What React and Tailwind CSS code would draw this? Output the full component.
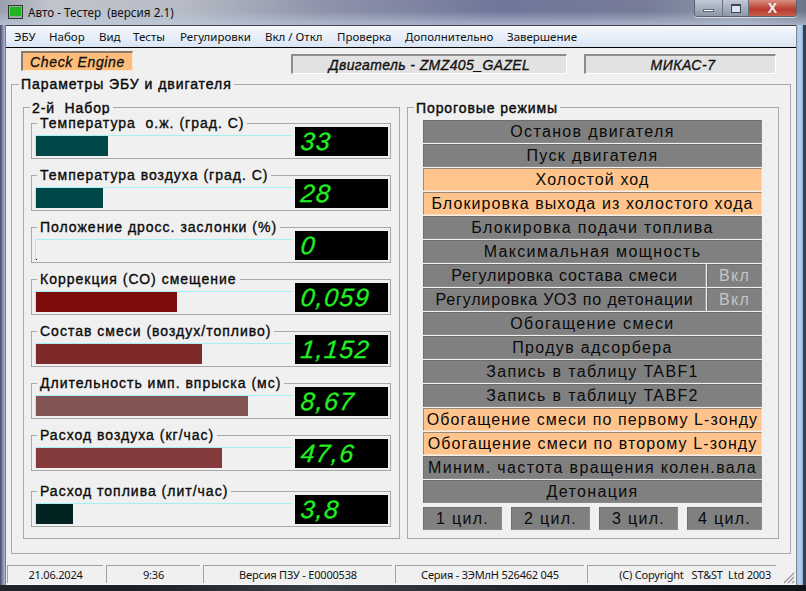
const sans = "font-['Liberation_Sans',Arial,sans-serif]";
const ui = "font-['Noto_Sans',sans-serif]";

const rows = [
  { label: "Температура  о.ж. (град. С)", value: "33", w: 72, color: "bg-[#004848]" },
  { label: "Температура воздуха (град. С)", value: "28", w: 67, color: "bg-[#004848]" },
  { label: "Положение дросс. заслонки (%)", value: "0", w: 0, color: "bg-[#004848]" },
  { label: "Коррекция (СО) смещение", value: "0,059", w: 141, color: "bg-[#7f0c0c]" },
  { label: "Состав смеси (воздух/топливо)", value: "1,152", w: 166, color: "bg-[#7f2a2a]" },
  { label: "Длительность имп. впрыска (мс)", value: "8,67", w: 212, color: "bg-[#835454]" },
  { label: "Расход воздуха (кг/час)", value: "47,6", w: 186, color: "bg-[#843a3c]" },
  { label: "Расход топлива (лит/час)", value: "3,8", w: 37, color: "bg-[#032222]", last: true },
];

const modes = [
  ["Останов двигателя"],
  ["Пуск двигателя"],
  ["Холостой ход", "on"],
  ["Блокировка выхода из холостого хода", "on"],
  ["Блокировка подачи топлива"],
  ["Максимальная мощность"],
  ["Регулировка состава смеси", "split"],
  ["Регулировка УОЗ по детонации", "split"],
  ["Обогащение смеси"],
  ["Продув адсорбера"],
  ["Запись в таблицу TABF1"],
  ["Запись в таблицу TABF2"],
  ["Обогащение смеси по первому L-зонду", "on"],
  ["Обогащение смеси по второму L-зонду", "on"],
  ["Миним. частота вращения колен.вала"],
  ["Детонация"],
];

const menu = [
  ["ЭБУ", "w-[35px]"],
  ["Набор", "w-[50px]"],
  ["Вид", "w-[34px]"],
  ["Тесты", "w-[47px]"],
  ["Регулировки", "w-[85px]"],
  ["Вкл / Откл", "w-[72px]"],
  ["Проверка", "w-[68px]"],
  ["Дополнительно", "w-[102px]"],
  ["Завершение", "w-[80px]"],
];

const status = [
  ["21.06.2024", "w-[96px] justify-center"],
  ["9:36", "w-[94px] justify-center"],
  ["Версия ПЗУ - Е0000538", "w-[189px] justify-center"],
  ["Серия - 3ЭМлН 526462 045", "w-[189px] justify-center"],
  ["(C) Copyright   ST&ST  Ltd 2003", "w-[189px] justify-end pr-[5px]"],
];

const btn = "h-[23px] flex items-center justify-center border-t border-l border-t-[#6e6e6e] border-l-[#6e6e6e] border-r border-b border-r-[#8a8a8a] border-b-[#8a8a8a] text-[16px] leading-none whitespace-pre text-[#0a0a0a]";

function Legend({ children, className }) {
  return (
    <span className={`absolute bg-[#f0f0f0] whitespace-pre text-[#0a0a0a] ${className}`}>{children}</span>
  );
}

function Row({ label, value, w, color, last }) {
  return (
    <div className={`relative h-[36px] ml-[7px] w-[360px] border border-[#a8a8a8] pl-[3px] pt-[3px] flex ${last ? "mt-[20px]" : "mt-[16px] first:mt-0"}`}>
      <Legend className={`${sans} left-[5px] top-[-9px] px-[3px] text-[14px] leading-[16px] tracking-[1px] [-webkit-text-stroke:0.35px_#0a0a0a]`}>{label}</Legend>
      <div className="w-[257px] pt-[8px]">
        <div className="h-[1px] bg-[#a4f0f0]" />
        <div className="h-[20px] border-l border-[#a4f0f0] flex items-end">
          {w > 0 ? <div className={`h-full ${color}`} style={{ width: w }} /> : <div className="w-[1px] h-[1px] bg-black" />}
        </div>
      </div>
      <div className={`ml-[3px] w-[93px] h-[29px] bg-black pl-[6px] italic text-[25px] leading-[29px] tracking-[1.3px] text-[#22ee22] ${sans}`}>
        <span className="inline-block -skew-x-6 [-webkit-text-stroke:0.3px_#22ee22]">{value}</span>
      </div>
    </div>
  );
}

function Mode({ text, kind }) {
  const on = kind === "on";
  if (kind === "split") {
    return (
      <div className="flex gap-[1px]">
        <div className={`${btn} w-[283px] bg-[#808080] border-r-[#9a9a9a] tracking-[0.85px]`}>{text}</div>
        <div className={`${btn} flex-1 bg-[#808080] text-[#c4c4c4] tracking-[1.3px]`}>Вкл</div>
      </div>
    );
  }
  return <div className={`${btn} ${on ? "bg-[#ffc48c] border-t-[#9c8a78] border-l-[#9c8a78] border-r-[#ffd8b0] border-b-[#ffd8b0] tracking-[1.1px]" : "bg-[#808080] tracking-[1.35px]"}`}>{text}</div>;
}

function Cyl({ n, className }) {
  return <div className={`${btn} ${className} bg-[#808080] tracking-[1.3px]`}>{n} цил.</div>;
}

export default function App() {
  return (
    <div className="w-[806px] h-[591px] overflow-hidden flex flex-col bg-[#20242c]">
      {/* title bar */}
      <div className="h-[25px] shrink-0 flex items-start pl-[8px] pr-[9px] bg-[linear-gradient(180deg,#00000000_0%,#00000000_45%,#bccadcb0_100%),linear-gradient(90deg,#9aa0ae_0%,#c0c4cc_6%,#b8bcc6_22%,#8e94aa_40%,#70769a_62%,#767c98_80%,#8e98aa_92%,#6c7688_100%)]">
        <div className="mt-[5px] w-[15px] h-[14px] border border-[#303838] bg-[#9aa8a8] p-[1px]">
          <div className="w-full h-[9px] bg-[#22b422]" />
        </div>
        <div className={`${ui} ml-[5px] mt-[3px] text-[11.7px] leading-[18px] whitespace-pre text-[#101010]`}>Авто - Тестер  (версия 2.1)</div>
        <div className="ml-auto h-[17px] w-[103px] flex border border-t-0 border-[#5a6270] rounded-b-[4px] overflow-hidden shadow-[0_1px_0_#ffffffa0]">
          <div className="w-[28px] flex items-center justify-center bg-[linear-gradient(180deg,#c2cad6,#8c96a6)] border-r border-[#6a7280]">
            <div className="w-[11px] h-[3px] mt-[5px] bg-white border border-[#606878]" />
          </div>
          <div className="w-[26px] flex items-center justify-center bg-[linear-gradient(180deg,#c2cad6,#8c96a6)] border-r border-[#6a7280]">
            <div className="w-[10px] h-[9px] border border-[#404858] border-t-2 bg-[#dfe4ea]" />
          </div>
          <div className={`flex-1 flex items-center justify-center bg-[linear-gradient(180deg,#d89080,#b83a2e_60%,#c4604c)] text-[#eef0f2] font-bold text-[14px] leading-none ${sans}`}>X</div>
        </div>
      </div>

      <div className="h-[560px] shrink-0 flex">
        {/* left frame */}
        <div className="w-[6px] bg-[linear-gradient(90deg,#45455e,#8a90b4_50%,#a8aecb_75%,#5a6070)]" />

        {/* window */}
        <div className="w-[790px] flex flex-col bg-[#f0f0f0] border-b border-[#f8f8f8]">
          {/* menu */}
          <div className={`${ui} h-[23px] shrink-0 flex items-center pl-[8px] text-[11.5px] leading-none text-[#101010] border-t border-t-[#404450] border-b border-b-black bg-[linear-gradient(180deg,#f6f8fc,#d9e5f4)]`}>
            {menu.map(([m, w]) => <span key={m} className={`${w} whitespace-pre`}>{m}</span>)}
          </div>

          {/* header strip */}
          <div className="h-[36px] shrink-0 flex items-start pl-[15px]">
            <div className={`${sans} mt-[3px] w-[112px] h-[20px] flex items-center justify-center bg-[#ffbd7c] border-t-2 border-l-2 border-t-[#8a7a68] border-l-[#8a7a68] border-b border-r border-b-[#fbe8d4] border-r-[#fbe8d4] italic text-[14px] tracking-[0.65px] leading-none text-[#111] [-webkit-text-stroke:0.3px_#111]`}>Check Engine</div>
            <div className={`${sans} ml-[158px] mt-[6px] w-[276px] h-[20px] flex items-center justify-center bg-[#e2e2e2] border-t-2 border-l-2 border-t-[#8c8c8c] border-l-[#8c8c8c] border-b border-r border-b-white border-r-white italic text-[14px] tracking-[0.4px] leading-none text-[#111] [-webkit-text-stroke:0.35px_#111]`}>Двигатель - ZMZ405_GAZEL</div>
            <div className={`${sans} ml-[17px] mt-[6px] w-[192px] h-[20px] flex items-center justify-center bg-[#e2e2e2] border-t-2 border-l-2 border-t-[#8c8c8c] border-l-[#8c8c8c] border-b border-r border-b-white border-r-white italic text-[14px] tracking-[0.6px] leading-none text-[#111] [-webkit-text-stroke:0.35px_#111] pl-[5px]`}>МИКАС-7</div>
          </div>

          {/* parameters group */}
          <div className={`${sans} relative ml-[5px] w-[780px] h-[470px] shrink-0 border border-[#a8a8a8] pt-[22px] pl-[11px] flex gap-[7px]`}>
            <Legend className="left-[7px] top-[-9px] px-[2px] text-[14px] leading-[16px] tracking-[0.95px] [-webkit-text-stroke:0.4px_#0a0a0a]">Параметры ЭБУ и двигателя</Legend>

            <div className="relative w-[377px] h-[432px] border border-[#a8a8a8] pt-[15px]">
              <Legend className="left-[6px] top-[-8px] px-[2px] text-[14px] leading-[16px] tracking-[0.9px] [-webkit-text-stroke:0.4px_#0a0a0a]">{"2-й  Набор"}</Legend>
              <div className="flex flex-col">
                {rows.map((r) => <Row key={r.label} {...r} />)}
              </div>
            </div>

            <div className="relative w-[372px] h-[432px] border border-[#a8a8a8] pt-[12px] px-[15px]">
              <Legend className="left-[6px] top-[-8px] px-[2px] text-[14px] leading-[16px] tracking-[0.9px] [-webkit-text-stroke:0.4px_#0a0a0a]">Пороговые режимы</Legend>
              <div className="flex flex-col gap-[1px] w-[339px]">
                {modes.map(([t, k]) => <Mode key={t} text={t} kind={k} />)}
              </div>
              <div className="flex w-[339px] mt-[4px]">
                <Cyl n={1} className="w-[79px]" />
                <Cyl n={2} className="ml-[9px] w-[79px]" />
                <Cyl n={3} className="ml-[9px] w-[79px]" />
                <Cyl n={4} className="ml-[9px] w-[75px]" />
              </div>
            </div>
          </div>

          {/* status bar */}
          <div className={`${ui} relative mt-[11px] ml-[1px] flex gap-[3px] text-[11px] leading-none text-[#141414]`}>
            {status.map(([s, w]) => (
              <div key={s} className={`${w} h-[18px] flex items-center whitespace-pre border-t border-l border-[#a0a0a0] tracking-[-0.2px]`}>{s}</div>
            ))}
            <svg className="absolute right-[1px] top-[6px]" width="12" height="13" viewBox="0 0 12 13">
              <path d="M11 2 L1 12 M11 6 L5 12 M11 10 L9 12" stroke="#9a9a9a" strokeWidth="1.2" fill="none" />
            </svg>
          </div>
        </div>

        {/* right frame */}
        <div className="flex-1 flex">
          <div className="w-[1px] bg-[#808890]" />
          <div className="w-[6px] bg-[linear-gradient(90deg,#a0c4ea,#b8d6f4_50%,#8ab0d8)]" />
          <div className="flex-1 bg-[#3a4048]" />
        </div>
      </div>

      {/* bottom frame */}
      <div className="flex-1 bg-[linear-gradient(90deg,#20242c,#1a1e26_15%,#3a4048_40%,#1a1e26_70%,#101418)]" />
    </div>
  );
}
